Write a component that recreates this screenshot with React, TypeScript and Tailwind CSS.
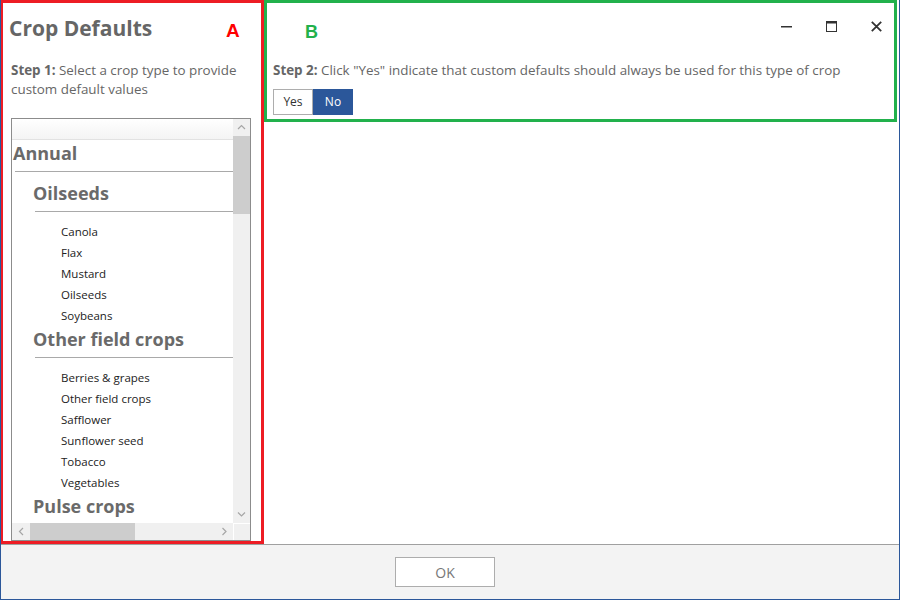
import React from "react";

const FONT = { fontFamily: '"Open Sans", "Noto Sans", Arial, sans-serif' };

function Chevron({ dir }: { dir: "up" | "down" | "left" | "right" }) {
  const pts: Record<string, string> = {
    up: "1,5 4.5,1.5 8,5",
    down: "1,1.5 4.5,5 8,1.5",
    left: "5,1 1.5,4.5 5,8",
    right: "1.5,1 5,4.5 1.5,8",
  };
  const w = dir === "up" || dir === "down" ? 9 : 7;
  const h = dir === "up" || dir === "down" ? 7 : 9;
  return (
    <svg width={w} height={h} viewBox={`0 0 ${w} ${h}`}>
      <polyline points={pts[dir]} fill="none" stroke="#a6a6a6" strokeWidth="1.2" />
    </svg>
  );
}

function Item({ label }: { label: string }) {
  return <div className="h-[21px] leading-[21px] text-[11.5px] text-[#222] whitespace-nowrap">{label}</div>;
}

function SubGroup({ title, items }: { title: string; items: string[] }) {
  return (
    <div>
      <div className="ml-[23px] border-b border-[#a9a9a9] pb-[5px]">
        <div className="-ml-[2px] text-[18px] font-bold text-[#6a6a6a] leading-[26px] whitespace-nowrap">{title}</div>
      </div>
      {items.length > 0 && (
        <div className="pt-[9px] pl-[49px]">
          {items.map((i) => (
            <Item key={i} label={i} />
          ))}
        </div>
      )}
    </div>
  );
}

export default function App() {
  return (
    <div
      className="relative w-[900px] h-[600px] bg-white border-x border-b border-[#2b579a] flex flex-col overflow-hidden"
      style={FONT}
    >
      <div className="flex h-[544px]">
        {/* Left column */}
        <div className="w-[263px] flex flex-col">
          <div className="mt-[14px] pl-[8px] text-[21px] font-bold text-[#666] leading-[28px]">Crop Defaults</div>
          <div className="mt-[19px] pl-[10px] pr-[4px] text-[13.4px] leading-[19px] text-[#666]">
            <span className="font-bold">Step 1:</span> Select a crop type to provide custom default values
          </div>
          <div className="mt-[19px] ml-[10px] w-[240px] h-[423px] border border-[#8c8c8c] flex flex-col">
            <div className="flex flex-1 min-h-0">
              <div className="flex-1 min-w-0 overflow-hidden">
                <div className="h-[21px] border-b border-[#e2e2e2] bg-gradient-to-b from-white to-[#f4f4f4]" />
                <div className="ml-[3px] border-b border-[#a9a9a9] pb-[5px]">
                  <div className="-ml-[2px] text-[18px] font-bold text-[#6a6a6a] leading-[26px]">Annual</div>
                </div>
                <div className="pt-[8px]">
                  <SubGroup title="Oilseeds" items={["Canola", "Flax", "Mustard", "Oilseeds", "Soybeans"]} />
                  <SubGroup
                    title="Other field crops"
                    items={["Berries & grapes", "Other field crops", "Safflower", "Sunflower seed", "Tobacco", "Vegetables"]}
                  />
                  <div className="ml-[21px] text-[18px] font-bold text-[#6a6a6a] leading-[26px] whitespace-nowrap">
                    Pulse crops
                  </div>
                </div>
              </div>
              {/* vertical scrollbar */}
              <div className="w-[17px] bg-[#f0f0f0] flex flex-col">
                <div className="h-[17px] flex items-center justify-center">
                  <Chevron dir="up" />
                </div>
                <div className="h-[78px] bg-[#cdcdcd]" />
                <div className="flex-1" />
                <div className="h-[17px] flex items-center justify-center">
                  <Chevron dir="down" />
                </div>
              </div>
            </div>
            {/* horizontal scrollbar */}
            <div className="flex h-[17px]">
              <div className="flex-1 bg-[#f0f0f0] flex">
                <div className="w-[18px] flex items-center justify-center">
                  <Chevron dir="left" />
                </div>
                <div className="w-[105px] bg-[#cdcdcd]" />
                <div className="flex-1" />
                <div className="w-[17px] flex items-center justify-center">
                  <Chevron dir="right" />
                </div>
              </div>
              <div className="w-[17px] bg-[#f0f0f0] border-l border-t border-white" />
            </div>
          </div>
        </div>

        {/* Right column */}
        <div className="flex-1 flex flex-col">
          <div className="flex justify-end items-center mt-[21px] h-[10px] pr-[17px] text-[#333]">
            <svg width="11" height="10" viewBox="0 0 11 10">
              <rect x="0" y="5" width="11" height="1.5" fill="#333" />
            </svg>
            <svg className="ml-[34px]" width="11" height="11" viewBox="0 0 11 11">
              <rect x="0.5" y="0.5" width="10" height="10" fill="none" stroke="#333" strokeWidth="1" />
              <rect x="0.5" y="0.5" width="10" height="2" fill="#333" />
            </svg>
            <svg className="ml-[34px]" width="11" height="11" viewBox="0 0 11 11">
              <path d="M0.8 0.8 L10.2 10.2 M10.2 0.8 L0.8 10.2" stroke="#333" strokeWidth="1.8" />
            </svg>
          </div>
          <div className="mt-[30px] pl-[9px] text-[13.4px] leading-[19px] text-[#666] whitespace-nowrap">
            <span className="font-bold">Step 2:</span> Click "Yes" indicate that custom defaults should always be used for this type of crop
          </div>
          <div className="mt-[9px] pl-[9px] flex">
            <div className="w-[40px] h-[26px] border border-[#adadad] bg-white text-[12px] text-[#333] flex items-center justify-center">
              Yes
            </div>
            <div className="w-[40px] h-[26px] bg-[#2b579a] text-[12px] text-white flex items-center justify-center">
              No
            </div>
          </div>
        </div>
      </div>

      {/* Footer */}
      <div className="flex-1 border-t border-[#a0a0a0] bg-[#f3f3f3] pt-[12px] pl-[394px]">
        <div className="w-[100px] h-[30px] border border-[#adadad] bg-white text-[14px] text-[#777] flex items-center justify-center">
          OK
        </div>
      </div>

      {/* Annotation overlays */}
      <div className="absolute left-[-1px] top-0 w-[264px] h-[544px] border-[3px] border-[#ed1c24] pointer-events-none" />
      <div className="absolute left-[263px] top-0 w-[633px] h-[122px] border-[3px] border-[#22b14c] pointer-events-none" />
      <div
        className="absolute left-[225px] top-[19px] text-[19px] font-bold text-[#ff0000] leading-[24px]"
        style={{ fontFamily: '"Liberation Sans", Arial, sans-serif' }}
      >
        A
      </div>
      <div
        className="absolute left-[304px] top-[20px] text-[18px] font-bold text-[#22b14c] leading-[24px]"
        style={{ fontFamily: '"Liberation Sans", Arial, sans-serif' }}
      >
        B
      </div>
    </div>
  );
}
